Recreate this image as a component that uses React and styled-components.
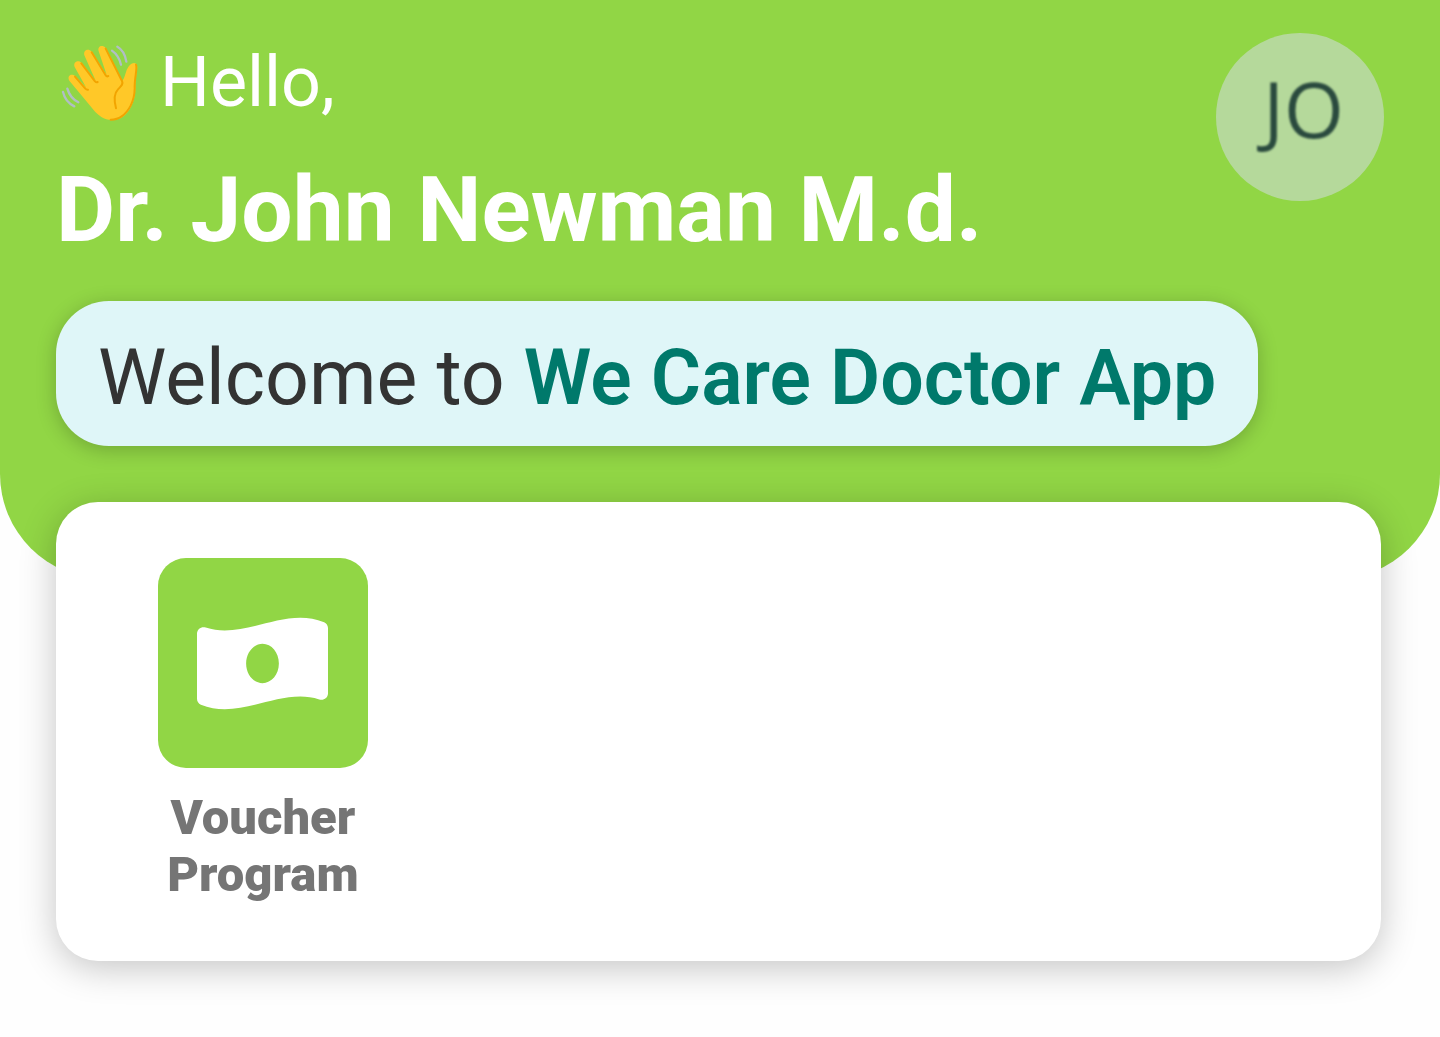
import React from "react";
import styled, { createGlobalStyle } from "styled-components";

const GREEN = "#91d645";

const GlobalStyle = createGlobalStyle`
  * { box-sizing: border-box; }
  body {
    margin: 0;
    background: #fefefe;
    font-family: Roboto, "Liberation Sans", sans-serif;
  }
`;

const Header = styled.header`
  display: flex;
  align-items: flex-start;
  justify-content: space-between;
  padding: 33px 56px 133px;
  background: ${GREEN};
  border-radius: 0 0 105px 105px;
`;

const Intro = styled.div`
  display: flex;
  flex-direction: column;
  align-items: flex-start;
  padding-top: 7px;
  color: #fff;
`;

const Greeting = styled.p`
  display: flex;
  align-items: center;
  gap: 18px;
  margin: 0;
  padding-left: 2px;
  font-size: 70px;
  line-height: 84px;
`;

const DoctorName = styled.h1`
  margin: 33px 0 37px;
  font-size: 91px;
  font-weight: 700;
  line-height: 107px;
`;

const Welcome = styled.p`
  margin: 0;
  padding: 33px 42px 23px;
  border-radius: 53px;
  background: #dff6f8;
  color: #333;
  font-size: 77px;
  line-height: 89px;
  white-space: nowrap;
  box-shadow: 0 4px 20px rgba(0, 0, 0, 0.22);
`;

const AppName = styled.strong`
  color: #00796b;
  font-weight: 600;
`;

const Avatar = styled.button`
  flex: none;
  width: 168px;
  height: 168px;
  margin-left: -168px;
  padding: 0 0 18px 7px;
  border: 0;
  border-radius: 50%;
  background: #b5d99b;
  color: #2a4a3e;
  font-family: "Open Sans", "Noto Sans", sans-serif;
  font-size: 77px;
  line-height: 105px;
`;

const Initials = styled.span`
  filter: blur(1px);
`;

const Menu = styled.nav`
  display: grid;
  grid-template-columns: repeat(4, 1fr);
  margin: -77px 59px 76px 56px;
  padding: 56px 55px;
  border-radius: 42px;
  background: #fff;
  box-shadow: 0 7px 36px rgba(0, 0, 0, 0.23);
`;

const MenuItem = styled.a`
  display: flex;
  flex-direction: column;
  align-items: center;
  gap: 21px;
  padding-bottom: 2px;
  color: #757575;
  font-size: 49px;
  font-weight: 900;
  line-height: 57px;
  text-align: center;
  text-decoration: none;
`;

const Tile = styled.span`
  display: flex;
  align-items: center;
  justify-content: center;
  width: 210px;
  height: 210px;
  border-radius: 28px;
  background: ${GREEN};
  color: #fff;
`;

const WavingHand = () => (
  <svg width="84" height="84" viewBox="0 0 252 252" fill="none" role="img" aria-label="Waving hand">
    <path
      fill="#ffc828"
      d="M97 198L34 122C26 108 40 98 52 109L84 142L50 81C44 66 60 58 70 68L113 122L80 48C73 32 90 22 101 35L146 105L122 34C117 18 134 13 143 24L193 122C198 118 200 108 206 90C212 76 220 69 228 69C238 70 239 80 237 92C234 112 231 122 232 145C232 185 215 215 195 230C175 243 148 243 130 231C116 222 107 210 97 198Z"
    />
    <g stroke="#f2a400" strokeWidth="6" strokeLinecap="round" strokeLinejoin="round">
      <path d="M51 110L82 146Q86 150 90 149" />
      <path d="M70 70L111 124Q115 128 119 126" />
      <path d="M101 37L143 106Q147 111 151 108" />
      <path d="M143 26L192 123C197 133 189 139 180 148C167 161 168 182 174 205" />
      <path d="M234 74C239 86 229 112 230 145C230 185 211 215 191 229C181 236 170 239 158 239" />
    </g>
    <g stroke="#b0bec5" strokeWidth="7" strokeLinecap="round">
      <path d="M162 32Q182 46 189 74" />
      <path d="M178 20Q200 32 205 65" />
      <path d="M28 146Q36 174 61 187" />
      <path d="M15 156Q22 186 49 199" />
    </g>
  </svg>
);

const MoneyIcon = () => (
  <svg width="131" height="105" viewBox="0 0 640 512" fill="currentColor" aria-hidden="true">
    <path
      fillRule="evenodd"
      d="M621.16 54.46C582.37 38.19 543.55 32 504.75 32c-123.17-.01-246.33 62.34-369.5 62.34-30.89 0-61.76-3.92-92.65-13.72-3.47-1.1-6.95-1.62-10.35-1.62C15.04 79 0 92.32 0 110.81v317.26c0 12.63 7.23 24.6 18.84 29.46C57.63 473.81 96.45 480 135.25 480c123.17 0 246.34-62.35 369.51-62.35 30.89 0 61.76 3.92 92.65 13.72 3.47 1.1 6.95 1.62 10.35 1.62 17.21 0 32.25-13.32 32.25-31.81V83.93c-.01-12.64-7.24-24.6-18.85-29.47zM320 352c-44.19 0-80-42.99-80-96 0-53.02 35.82-96 80-96s80 42.98 80 96c0 53.03-35.83 96-80 96z"
    />
  </svg>
);

export default function App() {
  return (
    <>
      <GlobalStyle />
      <Header>
        <Intro>
          <Greeting>
            <WavingHand />
            Hello,
          </Greeting>
          <DoctorName>Dr. John Newman M.d.</DoctorName>
          <Welcome>
            Welcome to <AppName>We Care Doctor App</AppName>
          </Welcome>
        </Intro>
        <Avatar type="button">
          <Initials>JO</Initials>
        </Avatar>
      </Header>
      <Menu>
        <MenuItem href="#voucher">
          <Tile>
            <MoneyIcon />
          </Tile>
          <span>
            Voucher
            <br />
            Program
          </span>
        </MenuItem>
      </Menu>
    </>
  );
}
